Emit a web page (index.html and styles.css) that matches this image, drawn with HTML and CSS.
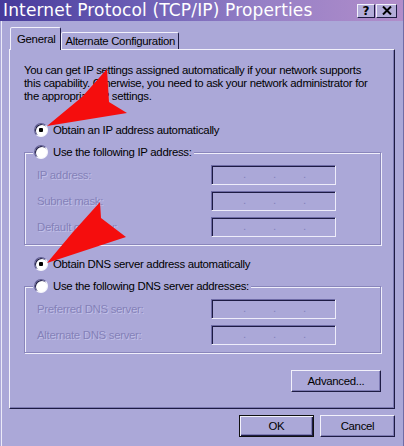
FILE: index.html
```html
<!DOCTYPE html>
<html lang="en">
<head>
    <meta charset="UTF-8">
    <title>Internet Protocol (TCP/IP) Properties</title>
    <link rel="stylesheet" href="styles.css">
</head>
<body>
<div class="window">

    <div class="titlebar">
        <span class="title">Internet Protocol (TCP/IP) Properties</span>
        <div class="caption-btns">
            <span class="cap-btn help">?</span>
            <span class="cap-btn close">
                <svg width="10" height="9" viewBox="0 0 10 9"><path d="M1 0.5 L9 8.5 M9 0.5 L1 8.5" stroke="#000" stroke-width="2"/></svg>
            </span>
        </div>
    </div>

    <div class="tabs">
        <span class="tab active">General</span>
        <span class="tab">Alternate Configuration</span>
    </div>

    <div class="panel">
        <p class="intro">You can get IP settings assigned automatically if your network supports<br>this capability. Otherwise, you need to ask your network administrator for<br>the appropriate IP settings.</p>

        <div class="radio checked">Obtain an IP address automatically</div>

        <div class="group">
            <div class="radio legend">Use the following IP address:</div>
            <div class="field"><span class="field-label">IP address:</span><div class="ip"><i>.</i><i>.</i><i>.</i></div></div>
            <div class="field"><span class="field-label">Subnet mask:</span><div class="ip"><i>.</i><i>.</i><i>.</i></div></div>
            <div class="field"><span class="field-label">Default gateway:</span><div class="ip"><i>.</i><i>.</i><i>.</i></div></div>
        </div>

        <div class="radio checked">Obtain DNS server address automatically</div>

        <div class="group">
            <div class="radio legend">Use the following DNS server addresses:</div>
            <div class="field"><span class="field-label">Preferred DNS server:</span><div class="ip"><i>.</i><i>.</i><i>.</i></div></div>
            <div class="field"><span class="field-label">Alternate DNS server:</span><div class="ip"><i>.</i><i>.</i><i>.</i></div></div>
        </div>

        <div class="panel-foot">
            <button class="btn adv">Advanced...</button>
        </div>
    </div>

    <div class="footer">
        <button class="btn default">OK</button>
        <button class="btn">Cancel</button>
    </div>

    <!-- red arrows pasted over the dialog -->
    <svg class="arrows" width="404" height="446" viewBox="0 0 404 446">
        <polygon points="107,69 82,97 47,126 127,113 109,102" fill="#f50d0d"/>
        <polygon points="100,202 73,232 47,263 126,237 101,218" fill="#f50d0d"/>
    </svg>

</div>
</body>
</html>
```
FILE: styles.css
```css
*{
    margin: 0;
    padding: 0;
    box-sizing: border-box;
}

body{
    background: #aba8d8;
    font-family: "Liberation Sans", Arial, sans-serif;
    font-size: 11.4px;
    letter-spacing: -0.3px;
    color: #000;
}

.window{
    position: relative;
    width: 404px;
    height: 446px;
    overflow: hidden;
    background: #aba8d8;
    border-right: 1px solid #6f6ca6;
    box-shadow: inset 1px 0 0 #aba8d8, inset 2px 0 0 #ebeaf8;
}

/* title bar */
.titlebar{
    display: flex;
    align-items: center;
    height: 21px;
    padding: 0 6px 0 3px;
    background: linear-gradient(90deg, #463a9b 0%, #6d5fb6 35%, #9680c6 65%, #b18dca 100%);
}

.title{
    font-family: "DejaVu Sans", sans-serif;
    font-size: 17px;
    letter-spacing: 0.15px;
    line-height: 21px;
    color: #fff;
    white-space: nowrap;
}

.caption-btns{
    display: flex;
    gap: 1px;
    margin-left: auto;
}

.cap-btn{
    display: flex;
    align-items: center;
    justify-content: center;
    width: 18px;
    height: 14px;
    background: #b3acd9;
    border: 1px solid;
    border-color: #f2f1fb #1d1b43 #1d1b43 #f2f1fb;
}

.cap-btn.help{
    font-family: "DejaVu Sans", sans-serif;
    font-weight: bold;
    font-size: 12px;
    letter-spacing: 0;
    line-height: 12px;
}

.cap-btn.close{
    width: 21px;
}

/* tabs */
.tabs{
    display: flex;
    align-items: flex-end;
    height: 22px;
    margin-top: 6px;
    padding-left: 10px;
}

.tab{
    position: relative;
    height: 17px;
    padding: 1px 3px 0 3px;
    line-height: 14px;
    border: 1px solid;
    border-bottom: none;
    border-color: #f2f1fb #1d1b43 transparent #f2f1fb;
    border-radius: 2px 2px 0 0;
    background: #aba8d8;
}

.tab.active{
    z-index: 1;
    height: 23px;
    margin-bottom: -1px;
    padding: 4px 5px 0 6px;
}

/* tab page */
.panel{
    margin-left: 9px;
    width: 386px;
    height: 360px;
    padding: 0 13px 0 14px;
    border: 1px solid;
    border-color: #f2f1fb #1d1b43 #1d1b43 #f2f1fb;
    box-shadow: inset -1px -1px 0 #7d7ab3;
}

.intro{
    margin-top: 14px;
    line-height: 13px;
}

.radio{
    display: flex;
    align-items: center;
    gap: 5px;
    height: 16px;
    margin: 19px 0 0 10px;
    line-height: 16px;
    white-space: nowrap;
}

.radio::before{
    content: "";
    flex: none;
    width: 12px;
    height: 12px;
    border-radius: 50%;
    background: #fff radial-gradient(circle, #000 0 2px, transparent 2.5px);
    border: 1px solid;
    border-color: #5d5a92 #f4f4fc #f4f4fc #5d5a92;
    box-shadow: inset 1px 1px 0 #1d1b43;
}

.radio:not(.checked)::before{
    background: #fff;
}

.group + .radio{
    margin-top: 11px;
}

.group{
    margin-top: 14px;
    padding: 0 0 7px 12px;
    border: 1px solid #8986bb;
    box-shadow: 1px 1px 0 #f0effb, inset 1px 1px 0 #f0effb;
}

.group:last-of-type{
    padding-bottom: 8px;
}

.radio.legend{
    width: fit-content;
    margin: -9px 0 0 -4px;
    padding: 0 2px 0 1px;
    background: #aba8d8;
}

.field{
    display: flex;
    align-items: center;
    height: 20px;
    margin-top: 6px;
}

.legend + .field{
    margin-top: 5px;
}

.field-label{
    width: 174px;
    color: #8481b8;
    text-shadow: 1px 1px 0 #c2c0e8;
}

.ip{
    display: flex;
    gap: 27px;
    width: 125px;
    height: 20px;
    padding-left: 31px;
    line-height: 17px;
    border: 1px solid;
    border-color: #6e6ba6 #eeedfa #eeedfa #6e6ba6;
    box-shadow: inset 1px 1px 0 #1d1b43;
}

.ip i{
    font-style: normal;
    width: 3px;
    color: #8481b8;
}

.panel-foot{
    display: flex;
    justify-content: flex-end;
    margin-top: 17px;
}

/* buttons */
.btn{
    width: 75px;
    height: 22px;
    font: inherit;
    letter-spacing: inherit;
    color: #000;
    background: #aba8d8;
    border: 1px solid;
    border-color: #f2f1fb #1d1b43 #1d1b43 #f2f1fb;
    box-shadow: inset -1px -1px 0 #7d7ab3;
}

.btn.adv{
    width: 90px;
}

.btn.default{
    border-color: #111;
    box-shadow: inset 1px 1px 0 #f2f1fb, inset -1px -1px 0 #1d1b43, inset -2px -2px 0 #7d7ab3;
}

.footer{
    display: flex;
    justify-content: flex-end;
    gap: 6px;
    width: 386px;
    margin: 6px 0 0 9px;
}

.arrows{
    position: absolute;
    left: 0;
    top: 0;
    pointer-events: none;
}
```
